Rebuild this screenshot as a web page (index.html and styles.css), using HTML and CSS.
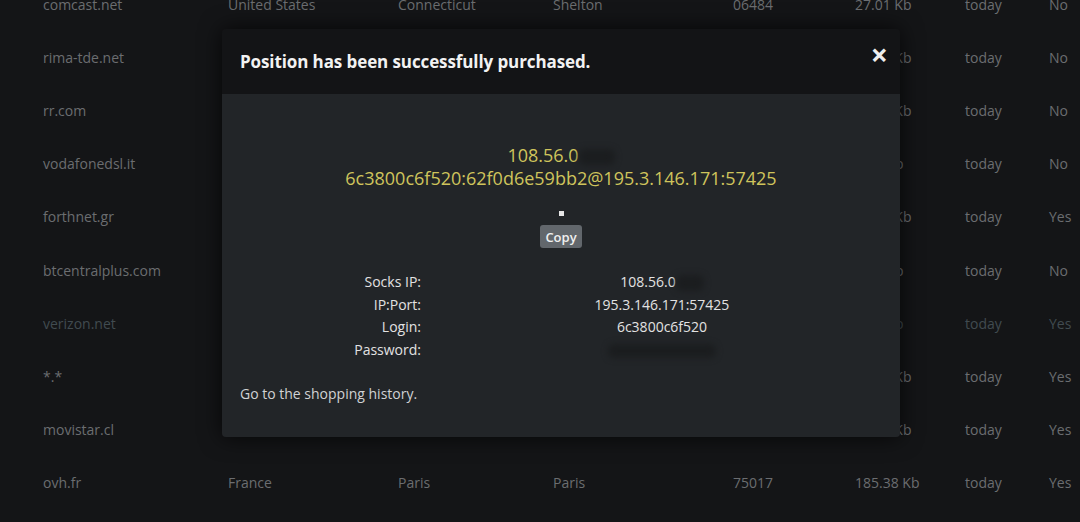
FILE: index.html
```html
<!DOCTYPE html>
<html lang="en">
  <head>
    <meta charset="UTF-8" />
    <title>Socks list</title>
    <link rel="stylesheet" href="styles.css">
  </head>
  <body>
    <div class="list">
      <div class="row"><span>comcast.net</span><span>United States</span><span>Connecticut</span><span>Shelton</span><span>06484</span><span>27.01 Kb</span><span>today</span><span>No</span></div>
      <div class="row"><span>rima-tde.net</span><span></span><span></span><span></span><span></span><span>64.12 Kb</span><span>today</span><span>No</span></div>
      <div class="row"><span>rr.com</span><span></span><span></span><span></span><span></span><span>91.40 Kb</span><span>today</span><span>No</span></div>
      <div class="row"><span>vodafonedsl.it</span><span></span><span></span><span></span><span></span><span>12.7 Kb</span><span>today</span><span>No</span></div>
      <div class="row"><span>forthnet.gr</span><span></span><span></span><span></span><span></span><span>48.33 Kb</span><span>today</span><span>Yes</span></div>
      <div class="row"><span>btcentralplus.com</span><span></span><span></span><span></span><span></span><span>33.9 Kb</span><span>today</span><span>No</span></div>
      <div class="row dim"><span>verizon.net</span><span></span><span></span><span></span><span></span><span>20.5 Kb</span><span>today</span><span>Yes</span></div>
      <div class="row"><span>*.*</span><span></span><span></span><span></span><span></span><span>75.06 Kb</span><span>today</span><span>Yes</span></div>
      <div class="row"><span>movistar.cl</span><span></span><span></span><span></span><span></span><span>56.81 Kb</span><span>today</span><span>Yes</span></div>
      <div class="row"><span>ovh.fr</span><span>France</span><span>Paris</span><span>Paris</span><span>75017</span><span>185.38 Kb</span><span>today</span><span>Yes</span></div>
    </div>

    <div class="modal">
      <div class="modal-head">
        <h2>Position has been successfully purchased.</h2>
        <span class="close">&times;</span>
      </div>
      <div class="modal-body">
        <div class="result">
          <div>108.56.0<span class="hidden-part w36"></span></div>
          <div>6c3800c6f520:62f0d6e59bb2@195.3.146.171:57425</div>
        </div>
        <div class="copy-box">
          <span class="dot"></span>
          <button class="copy">Copy</button>
        </div>
        <div class="info">
          <span class="label">Socks IP:</span><span class="value">108.56.0<span class="hidden-part w28"></span></span>
          <span class="label">IP:Port:</span><span class="value">195.3.146.171:57425</span>
          <span class="label">Login:</span><span class="value">6c3800c6f520</span>
          <span class="label">Password:</span><span class="value"><span class="hidden-part w108"></span></span>
        </div>
        <a class="history" href="#">Go to the shopping history.</a>
      </div>
    </div>
  </body>
</html>
```

FILE: styles.css
```css
body {
  margin: 0;
  background: #141517;
  font-family: "Open Sans", sans-serif;
  font-size: 14px;
  color: #6b6d70;
  overflow: hidden;
}
.list {
  margin-top: -22px;
}
.row {
  display: grid;
  grid-template-columns: 185px 170px 155px 180px 122px 110px 84px 1fr;
  padding-left: 43px;
  height: 53.1px;
  align-items: center;
}
.row.dim {
  color: #414b50;
}
.modal {
  position: absolute;
  left: 222px;
  top: 29px;
  width: 678px;
  border-radius: 4px;
  overflow: hidden;
  box-shadow: 0 0 22px rgba(0, 0, 0, 0.75);
}
.modal-head {
  background: #131416;
  height: 65px;
  display: flex;
  align-items: center;
  justify-content: space-between;
  padding: 0 12px 0 18px;
}
.modal-head h2 {
  margin: 0;
  font-size: 17px;
  font-weight: 700;
  letter-spacing: -0.1px;
  color: #f2f2f2;
}
.close {
  color: #eeeeee;
  font-size: 30px;
  font-weight: 700;
  line-height: 1;
  margin-top: -14px;
}
.modal-body {
  background: #222528;
  height: 343px;
  padding: 50px 18px 0;
  box-sizing: border-box;
}
.result {
  text-align: center;
  color: #cfc45c;
  font-size: 18px;
  line-height: 23px;
}
.hidden-part {
  display: inline-block;
  height: 16px;
  vertical-align: middle;
  background: #1b1d1f;
  border-radius: 6px;
  filter: blur(3px);
}
.w36 { width: 36px; }
.w28 { width: 28px; }
.w108 { width: 108px; height: 14px; }
.copy-box {
  display: flex;
  flex-direction: column;
  align-items: center;
  gap: 9px;
  margin-top: 21px;
}
.dot {
  width: 5px;
  height: 5px;
  background: #e6e6e6;
}
.copy {
  background: #62676c;
  color: #f0f0f0;
  border: 0;
  border-radius: 3px;
  font-family: "Open Sans", sans-serif;
  font-size: 13px;
  font-weight: 600;
  height: 23px;
  padding: 0 5px;
}
.info {
  display: grid;
  grid-template-columns: 181px 1fr;
  column-gap: 21px;
  margin-top: 23px;
  line-height: 22.7px;
  color: #e2e2e2;
}
.label {
  text-align: right;
}
.value {
  text-align: center;
}
.history {
  display: block;
  margin-top: 22px;
  color: #d0d2d4;
  text-decoration: none;
}
```
